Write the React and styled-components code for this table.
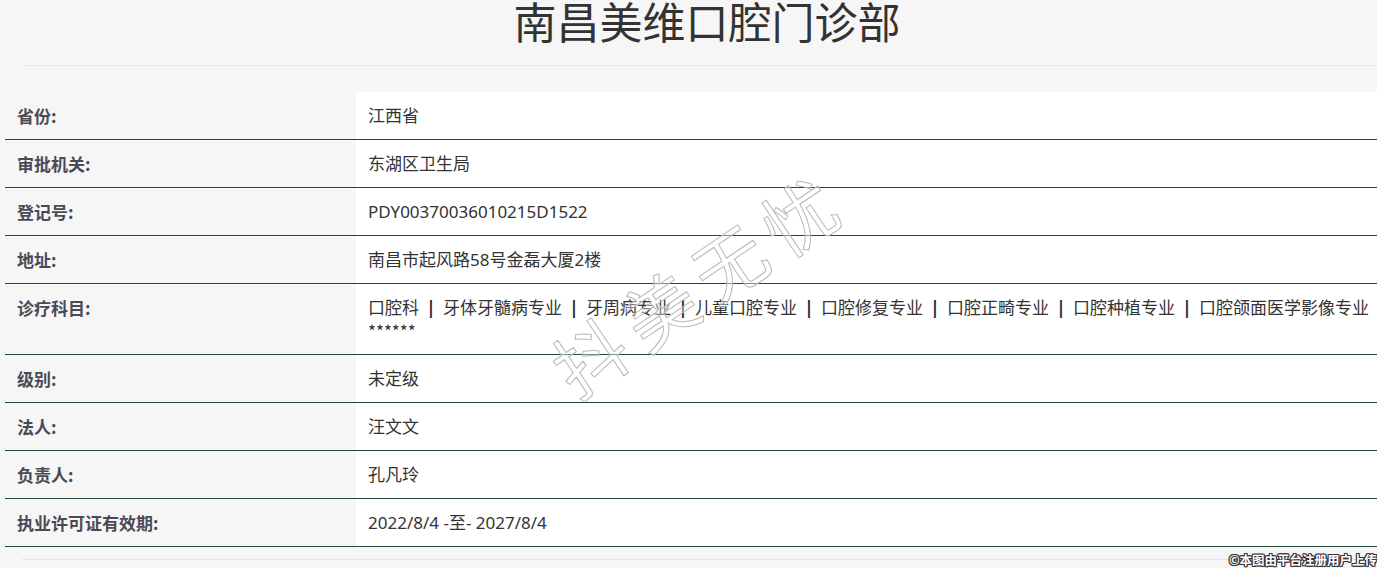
import React from 'react';
import styled, { createGlobalStyle } from 'styled-components';

const GlobalStyle = createGlobalStyle`
    html, body {
        margin: 0;
        padding: 0;
        overflow: hidden;
        background-color: #f6f6f6;
    }
    body {
        font-family: "Noto Sans", "Noto Sans CJK SC", sans-serif;
        color: #333;
    }
`;

const Page = styled.div`
    position: relative;
    width: 1377px;
    height: 568px;
    overflow: hidden;
`;

const Header = styled.header`
    margin-left: 22px;
    width: 1370px;
    height: 65px;
    border-bottom: 1px solid #e8e8e8;
`;

const Title = styled.h1`
    margin: 0;
    text-align: center;
    font-size: 43px;
    line-height: 40px;
    font-weight: 400;
    color: #333;
    font-family: "Noto Sans CJK SC", sans-serif;
`;

const Table = styled.div`
    margin: 26px 0 0 5px;
    width: 1420px;
`;

const Row = styled.div`
    display: grid;
    grid-template-columns: 351px 1fr;
    border-bottom: 1px solid #1f4a3a;
`;

const Label = styled.div`
    padding: 12px 12px;
    font-size: 17px;
    line-height: 23px;
    font-weight: 700;
    color: #4a4a56;
    font-family: "Noto Sans CJK SC", sans-serif;
`;

const Value = styled.div`
    padding: 12px 12px;
    background-color: #fff;
    font-size: 17px;
    line-height: 23px;
    color: #333;
    font-family: "Noto Sans", "Noto Sans CJK SC", sans-serif;
`;

const Line = styled.div`
    white-space: nowrap;
    font-family: ${(props) => (props.$cjk ? '"Noto Sans CJK SC", sans-serif' : 'inherit')};
`;

const Sep = styled.span`
    display: inline-block;
    width: 24px;
    text-align: center;
    font-weight: 700;
    color: #2a2a35;
`;

const Footer = styled.div`
    margin: 12px 0 0 22px;
    border-top: 1px solid #e4e4e4;
`;

const Watermark = styled.div`
    position: absolute;
    left: 698px;
    top: 281px;
    transform: translate(-50%, -50%) rotate(-34deg);
    white-space: nowrap;
    font-family: "Noto Sans CJK SC", sans-serif;
    font-size: 72px;
    letter-spacing: 12px;
    color: rgba(255, 255, 255, 0.4);
    -webkit-text-stroke: 1px #b8b8b8;
    pointer-events: none;
`;

const Credit = styled.div`
    position: absolute;
    right: 0;
    bottom: 1px;
    font-family: "Noto Sans CJK SC", sans-serif;
    font-size: 12.5px;
    line-height: 14px;
    font-weight: 700;
    color: #fff;
    text-shadow: 1px 0 0 #333, -1px 0 0 #333, 0 1px 0 #333, 0 -1px 0 #333,
        1px 1px 0 #333, -1px -1px 0 #333, 1px -1px 0 #333, -1px 1px 0 #333;
`;

const subjects = [
    '口腔科',
    '牙体牙髓病专业',
    '牙周病专业',
    '儿童口腔专业',
    '口腔修复专业',
    '口腔正畸专业',
    '口腔种植专业',
    '口腔颌面医学影像专业',
];

const rows = [
    { label: '省份:', value: '江西省' },
    { label: '审批机关:', value: '东湖区卫生局' },
    { label: '登记号:', value: 'PDY00370036010215D1522' },
    { label: '地址:', value: '南昌市起风路58号金磊大厦2楼' },
    { label: '诊疗科目:', subjects: true },
    { label: '级别:', value: '未定级' },
    { label: '法人:', value: '汪文文' },
    { label: '负责人:', value: '孔凡玲' },
    { label: '执业许可证有效期:', value: '2022/8/4 -至- 2027/8/4' },
];

const App = () => {
    return (
        <Page>
            <GlobalStyle />
            <Header>
                <Title>南昌美维口腔门诊部</Title>
            </Header>
            <Table>
                {rows.map((row) => (
                    <Row key={row.label}>
                        <Label>{row.label}</Label>
                        <Value>
                            {row.subjects ? (
                                <>
                                    <Line>
                                        {subjects.map((s, i) => (
                                            <React.Fragment key={s}>
                                                {i > 0 && <Sep>|</Sep>}
                                                {s}
                                            </React.Fragment>
                                        ))}
                                    </Line>
                                    <Line $cjk>******</Line>
                                </>
                            ) : (
                                row.value
                            )}
                        </Value>
                    </Row>
                ))}
            </Table>
            <Footer />
            <Watermark>抖美无忧</Watermark>
            <Credit>©本图由平台注册用户上传</Credit>
        </Page>
    );
};

export default App;
